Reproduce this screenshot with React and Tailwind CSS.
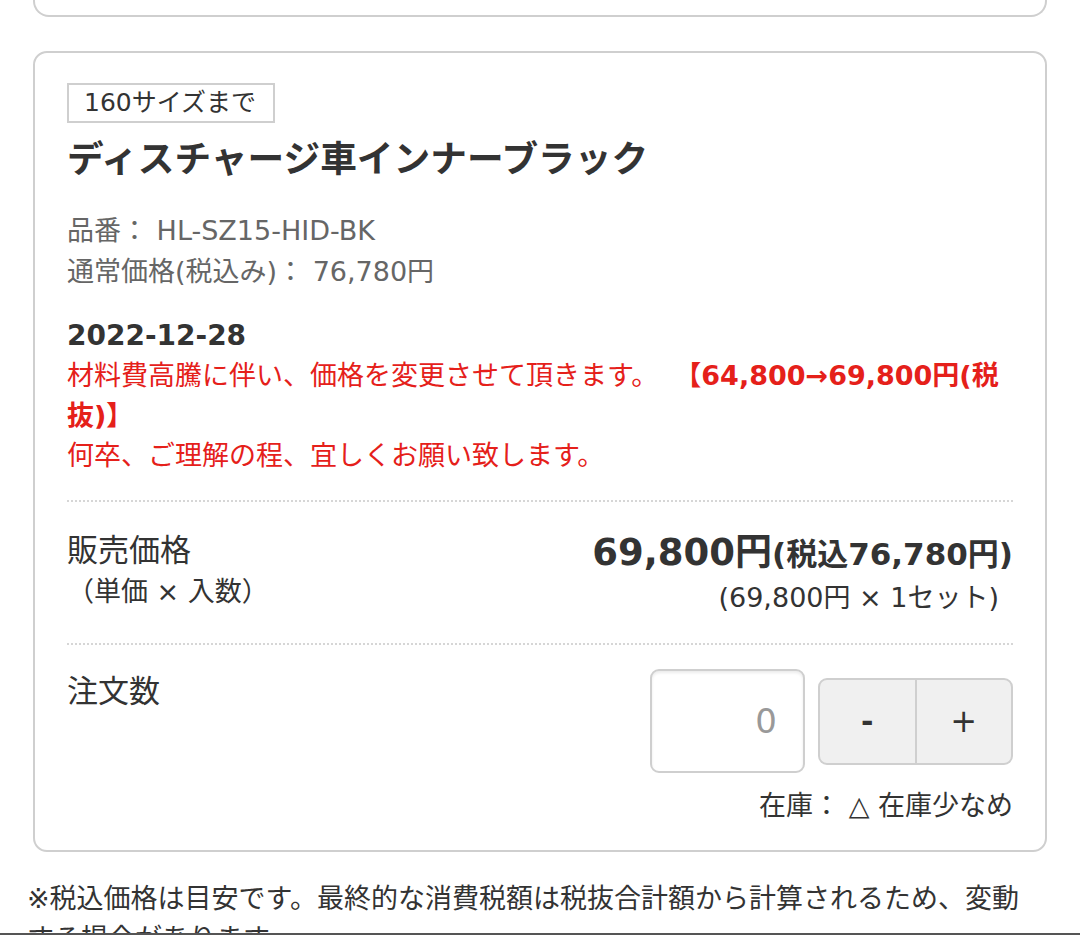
export default function App() {
  const font = { fontFamily: '"DejaVu Sans", "Noto Sans CJK JP", sans-serif' };
  return (
    <div
      style={font}
      className="h-[935px] overflow-hidden bg-white border-b-2 border-[#555] box-border text-[#333]"
    >
      {/* previous card remnant */}
      <div className="mx-[33px] h-[17px] border-2 border-t-0 border-[#cfcfcf] rounded-b-[16px]" />

      {/* product card */}
      <div className="mx-[33px] mt-[34px] border-2 border-[#cfcfcf] rounded-[14px] px-[32px] pt-[30px] pb-[24px]">
        <div className="inline-block border-2 border-[#cfcfcf] h-[40px] pl-[15px] pr-[17px] text-[25px] leading-[36px] text-[#333]">
          160サイズまで
        </div>
        <h1 className="mt-[15px] text-[36.7px] leading-[44px] font-bold text-[#333]">
          ディスチャージ車インナーブラック
        </h1>

        <div className="mt-[28px] text-[27px] leading-[41px] text-[#666]">
          <div>品番： HL-SZ15-HID-BK</div>
          <div>通常価格(税込み)： 76,780円</div>
        </div>

        <div className="mt-[24px] text-[28px] leading-[40px] font-bold text-[#333]">
          2022-12-28
        </div>
        <div className="text-[27px] leading-[40px] text-[#e5201a]">
          <div className="whitespace-nowrap">
            材料費高騰に伴い、価格を変更させて頂きます。
            <span className="font-bold ml-[16px]">　【64,800→69,800円(税</span>
          </div>
          <div className="font-bold">抜)】</div>
          <div>何卒、ご理解の程、宜しくお願い致します。</div>
        </div>

        <div className="mt-[24px] border-t-2 border-dotted border-[#d6d6d6]" />

        {/* price row */}
        <div className="flex justify-between pt-[26px] pb-[25px]">
          <div>
            <div className="text-[31px] leading-[44px] text-[#333]">販売価格</div>
            <div className="text-[27px] leading-[40px] text-[#333]">（単価 × 入数）</div>
          </div>
          <div className="flex flex-col items-end">
            <div className="flex items-baseline h-[50px] font-bold text-[#333] whitespace-nowrap">
              <span className="text-[37px] leading-[50px]">69,800円</span>
              <span className="text-[31px] leading-[50px]">(税込76,780円)</span>
            </div>
            <div className="text-[27px] leading-[40px] text-[#333] pr-[14px]">
              (69,800円 × 1セット)
            </div>
          </div>
        </div>

        <div className="border-t-2 border-dotted border-[#d6d6d6]" />

        {/* order row */}
        <div className="pt-[24px]">
          <div className="flex justify-between items-start">
            <div className="text-[31px] leading-[44px] text-[#333]">注文数</div>
            <div className="flex items-center gap-[13px]">
              <div className="w-[155px] h-[104px] border-2 border-[#cfcfcf] rounded-[9px] shadow-[inset_0_2px_3px_rgba(0,0,0,0.08)] flex items-center justify-end pr-[26px] text-[34px] text-[#999]">
                0
              </div>
              <div className="w-[195px] h-[87px] border-2 border-[#cfcfcf] rounded-[9px] bg-[#f0f0f0] flex overflow-hidden">
                <div className="flex-1 flex items-center justify-center text-[30px] font-bold text-[#333] border-r-2 border-[#cfcfcf]">
                  -
                </div>
                <div className="flex-1 flex items-center justify-center text-[32px] text-[#333]">
                  +
                </div>
              </div>
            </div>
          </div>
          <div className="mt-[13px] text-right text-[27px] leading-[40px] text-[#333]">
            在庫： △ 在庫少なめ
          </div>
        </div>
      </div>

      <p className="mt-[27px] pl-[27px] pr-[40px] text-[27px] leading-[40px] text-[#333]">
        ※税込価格は目安です。最終的な消費税額は税抜合計額から計算されるため、変動する場合があります。
      </p>
    </div>
  );
}
